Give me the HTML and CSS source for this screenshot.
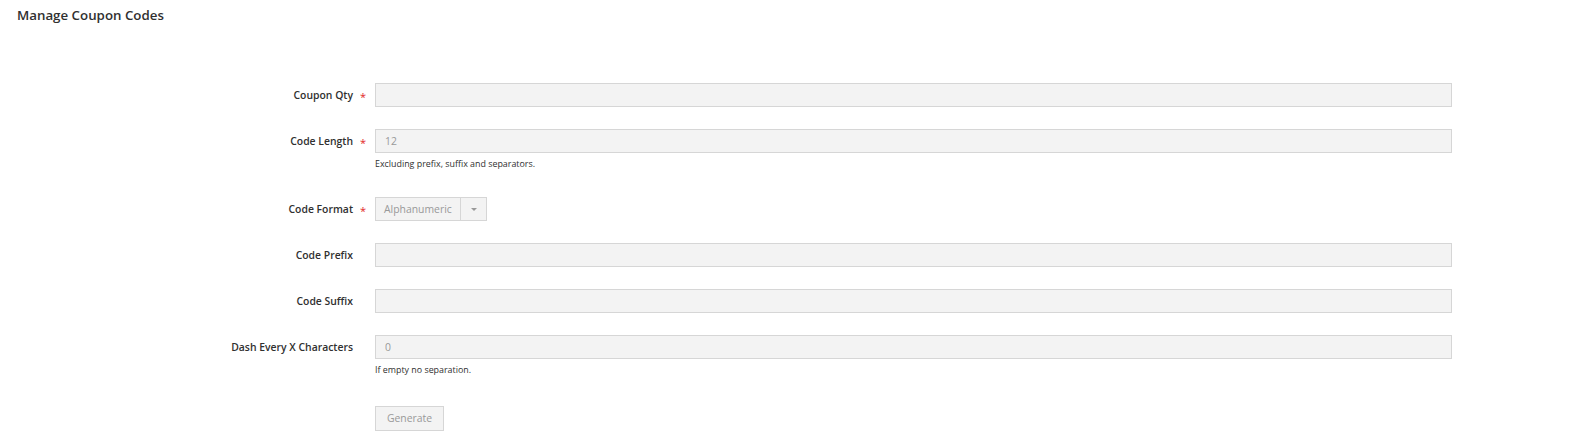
FILE: index.html
```html
<!DOCTYPE html>
<html>
<head>
<meta charset="utf-8">
<link rel="stylesheet" href="styles.css">
</head>
<body>
<div class="page">
  <h2 class="title">Manage Coupon Codes</h2>
  <form class="form">
    <div class="row">
      <label class="label required">Coupon Qty</label>
      <div class="control"><input class="input" type="text"></div>
    </div>
    <div class="row">
      <label class="label required">Code Length</label>
      <div class="control">
        <input class="input" type="text" value="12">
        <div class="note">Excluding prefix, suffix and separators.</div>
      </div>
    </div>
    <div class="row">
      <label class="label required">Code Format</label>
      <div class="control">
        <div class="select"><span class="select-value">Alphanumeric</span><span class="select-btn"><span class="arrow"></span></span></div>
      </div>
    </div>
    <div class="row">
      <label class="label">Code Prefix</label>
      <div class="control"><input class="input" type="text"></div>
    </div>
    <div class="row">
      <label class="label">Code Suffix</label>
      <div class="control"><input class="input" type="text"></div>
    </div>
    <div class="row">
      <label class="label">Dash Every X Characters</label>
      <div class="control">
        <input class="input" type="text" value="0">
        <div class="note">If empty no separation.</div>
      </div>
    </div>
    <div class="row row-btn">
      <span class="label"></span>
      <div class="control"><button type="button" class="btn">Generate</button></div>
    </div>
  </form>
</div>
</body>
</html>
```

FILE: styles.css
```css
* { box-sizing: border-box; }
html, body { margin: 0; padding: 0; background: #fff; }
body { font-family: "Open Sans", "Liberation Sans", sans-serif; color: #303030; }
.page { padding-top: 6px; }
.title { margin: 0 0 0 17px; font-size: 13.3px; font-weight: 600; line-height: 18px; color: #303030; }
.form { margin-top: 59px; display: flex; flex-direction: column; gap: 22px; }
.row { display: flex; align-items: flex-start; }
.row-first { margin-bottom: 1px; }
.label {
  width: 375px; flex: none; padding-right: 22px; position: relative;
  text-align: right; font-size: 10.4px; font-weight: 600; line-height: 24px; color: #303030;
}
.label.required::after {
  content: "*"; position: absolute; right: 9px; top: 2px; color: #e22626; font-size: 11px; font-weight: 400;
}
.control { width: 1077px; }
.input {
  display: block; width: 100%; height: 24px; margin: 0; padding: 0 9px;
  background: #f3f3f3; border: 1px solid #d6d6d6; border-radius: 0;
  font-family: inherit; font-size: 10.4px; color: #999; outline: none;
}
.note { margin-top: 4px; font-size: 8.9px; line-height: 13px; color: #303030; height: 18px; }
.select {
  display: flex; width: 112px; height: 24px; background: #f3f3f3; border: 1px solid #d6d6d6;
  font-size: 10.4px; color: #999;
}
.select-value { flex: 1; padding-left: 8px; line-height: 22px; }
.select-btn { width: 26px; border-left: 1px solid #d6d6d6; display: flex; align-items: center; justify-content: center; }
.arrow { width: 0; height: 0; border-left: 3px solid transparent; border-right: 3px solid transparent; border-top: 3px solid #999; }
.row-btn { margin-top: 2px; }
.btn {
  height: 25px; width: 69px; padding: 0; background: #f3f3f3; border: 1px solid #d6d6d6; border-radius: 0;
  font-family: inherit; font-size: 10.4px; color: #999;
}
```
